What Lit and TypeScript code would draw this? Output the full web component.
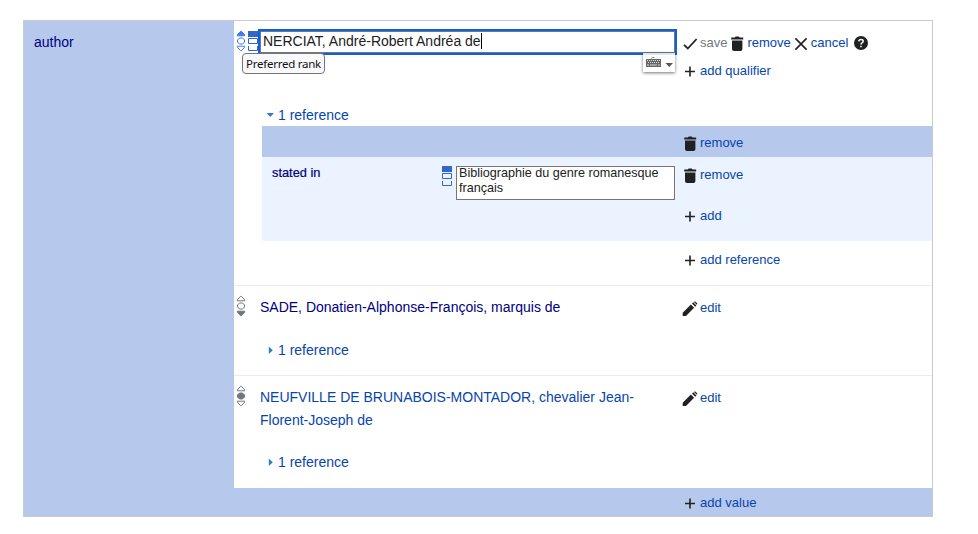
import { LitElement, html, css, svg, nothing } from "lit";
import { customElement, property } from "lit/decorators.js";

const glyphs: Record<string, unknown> = {
  check: svg`<path d="M2 9.900 5.800 13.500 14.600 4" fill="none" stroke="#202122" stroke-width="1.800"/>`,
  trash: svg`<path d="M2.200 2.600H5.700l1-1h3l1 1h3.500v2h-12zM3 5.400h10.400v8.700q0 1.900-1.900 1.900H4.900q-1.900 0-1.900-1.900z" fill="#202122"/>`,
  cross: svg`<path d="M2.400 3.400 13.600 14.600M13.600 3.400 2.400 14.600" fill="none" stroke="#202122" stroke-width="1.600"/>`,
  plus: svg`<path d="M3 8.500h10M8 3.500v10" fill="none" stroke="#202122" stroke-width="1.600"/>`,
  edit: svg`<path d="M.7 12.700 8.900 4.600l3.200 3.200-8.100 8.200H.7zM10 3.500l1.200-1.200 3.200 3.200-1.200 1.200zM12 1.900l.5-.4q.6-.3 1.100.2l1.500 1.500q.4.500.1 1l-.4.500z" fill="#202122"/>`,
};

@customElement("action-link")
export class ActionLink extends LitElement {
  @property() icon = "plus";
  @property() label = "";
  @property({ type: Boolean }) disabled = false;

  static styles = css`
    :host { display: inline-flex; height: 18px; align-items: flex-start; }
    svg { width: 16px; height: 16px; margin: 1px 2px 0 0; flex: none; overflow: visible; }
    .text { font: 13px/18px "Liberation Sans", Arial, sans-serif; color: #0645ad; white-space: nowrap; }
    .off { color: #72777d; }
  `;

  render() {
    return html`<svg viewBox="0 0 16 16">${glyphs[this.icon]}</svg
      ><span class="text ${this.disabled ? "off" : ""}">${this.label}</span>`;
  }
}

@customElement("rank-mark")
export class RankMark extends LitElement {
  @property() rank = "normal";
  @property() color = "#72777d";

  static styles = css`
    :host { display: block; width: 10px; height: 22px; }
    svg { display: block; }
  `;

  render() {
    const c = this.color;
    const fill = (r: string) => (this.rank === r ? c : "none");
    return html`<svg width="10" height="22" viewBox="0 0 10 22" stroke=${c} stroke-width="1">
      <path d="M1.300 5.800V4.900L4.600 1.300h.8L8.700 4.900v.9z" fill=${fill("preferred")} />
      <path d="M3.500 8h3L8.500 10v2L6.500 14h-3L1.500 12v-2z" fill=${fill("normal")} />
      <path d="M1.300 16.200v.9L4.600 20.700h.8L8.700 17.100v-.9z" fill=${fill("deprecated")} />
    </svg>`;
  }
}

@customElement("snak-mark")
export class SnakMark extends LitElement {
  static styles = css`
    :host { display: block; width: 10px; height: 20px; }
    svg { display: block; }
  `;

  render() {
    return html`<svg width="10" height="20" viewBox="0 0 10 20" fill="none" stroke="#36c">
      <path d="M0 0h10v6H0z" fill="#36c" stroke="none" />
      <path d="M.5 7.500h9v5h-9zM.5 15v4.500h9V15" />
    </svg>`;
  }
}

@customElement("reference-toggle")
export class ReferenceToggle extends LitElement {
  @property({ type: Boolean }) open = false;

  static styles = css`
    :host { display: flex; align-items: center; height: 20px; }
    svg { width: 8px; height: 8px; margin-right: 4px; }
    .text { font: 14px/20px "Liberation Sans", Arial, sans-serif; color: #0645ad; }
  `;

  render() {
    return html`<svg viewBox="0 0 8 8">
        <path d=${this.open ? "M.5 2h7.500L4.250 6z" : "M2.800 .5v7.500L6.800 4.250z"} fill="#347bb7" />
      </svg><span class="text">1 reference</span>`;
  }
}

@customElement("app-root")
export class AppRoot extends LitElement {
  static styles = css`
    :host {
      display: block; width: 978px; height: 534px; box-sizing: border-box;
      padding: 20px 0 0 23px; background: #fff;
      font: 14px/20px "Liberation Sans", Arial, sans-serif; color: #0645ad;
    }
    .group {
      display: grid; grid-template-columns: 210px 1fr; box-sizing: border-box;
      width: 910px; height: 497px; border: 1px solid #c8ccd1; background: #b6c8ec;
    }
    .property { padding: 11px 10px; color: #000080; }
    .values { display: flex; flex-direction: column; min-width: 0; }
    .statement {
      display: grid; grid-template-columns: 26px 422px 1fr; background: #fff;
      box-sizing: border-box; border-bottom: 1px solid #eaecf0;
    }
    .first { height: 265px; grid-template-rows: 84px 1fr; }
    .second { height: 90px; }
    .third { height: 112px; border-bottom: 0; }
    .ranks { display: flex; gap: 2px; padding: 9px 0 0 2px; }
    .editor { position: relative; padding: 8px 0 0; }
    .input {
      box-sizing: border-box; width: 419px; height: 26px; margin-left: -2px;
      border: 2px solid #0a61e4; padding: 0; display: flex; background: #fff;
    }
    .field { flex: 1; border: 1px solid #72777d; padding-left: 2px; line-height: 19px; color: #202122; white-space: nowrap; }
    .caret { display: inline-block; width: 1px; height: 16px; background: #000; vertical-align: -3px; }
    .ranks snak-mark { margin-top: 1px; }
    .tip {
      position: absolute; left: -18px; top: 32px; box-sizing: border-box; width: 83px; height: 21px;
      border: 1px solid #767676; border-radius: 4px; background: #f9f9fb; color: #111;
      font: 11.500px/19px "Noto Sans", sans-serif; letter-spacing: -.25px; text-align: center; white-space: nowrap;
    }
    .keys {
      position: absolute; left: 383px; top: 32px; width: 32px; height: 19px;
      background: rgba(255,255,255,.85); box-shadow: 0 1px 3px rgba(0,0,0,.55);
    }
    .keys svg { display: block; }
    .actions { display: flex; flex-direction: column; align-items: flex-start; gap: 10px; padding-top: 13px; }
    .line { display: flex; height: 18px; }
    .line action-link + action-link { margin-left: 2px; }
    .help { width: 14px; height: 14px; margin: 2px 0 0 6px; }
    .refs { grid-column: 1 / -1; padding-left: 28px; }
    .refs > reference-toggle { margin-left: 4px; }
    .band { height: 31px; background: #b6c8ec; padding-left: 420px; box-sizing: border-box; padding-top: 8px; margin-top: 1px; }
    .reference {
      display: grid; grid-template-columns: 180px 14px 226px 1fr; height: 84px;
      background: #eaf3ff; box-sizing: border-box; padding-top: 9px;
    }
    .name { padding: 0 0 0 10px; font-size: 12.800px; line-height: 14px; color: #000080; -webkit-text-stroke: .2px #000080; }
    .source {
      width: 219px; height: 34px; box-sizing: border-box; border: 1px solid #767676; background: #fff;
      padding: 0 2px; color: #202122; font-size: 12.600px; line-height: 15px;
    }
    .source div { margin-top: -1px; }
    .stack { display: flex; flex-direction: column; gap: 23px; }
    .more { padding: 10px 0 0 420px; }
    .value { padding-top: 10px; line-height: 23px; }
    .value .toggle { margin: 21px 0 0 6px; }
    .third .toggle { margin-top: 20px; }
    .visited { color: #000080; }
    .footer { padding: 6px 0 0 448px; }
  `;

  private statement(cls: string, rank: string, text: string, visited: boolean) {
    return html`<div class="statement ${cls}">
      <div class="ranks"><rank-mark rank=${rank}></rank-mark></div>
      <div class="value">
        <div class=${visited ? "visited" : nothing}>${text}</div>
        <reference-toggle class="toggle"></reference-toggle>
      </div>
      <div class="actions"><action-link icon="edit" label="edit"></action-link></div>
    </div>`;
  }

  render() {
    return html`<div class="group">
      <div class="property">author</div>
      <div class="values">
        <div class="statement first">
          <div class="ranks">
            <rank-mark rank="preferred" color="#3f7bea"></rank-mark><snak-mark></snak-mark>
          </div>
          <div class="editor">
            <div class="input"><div class="field">NERCIAT, André-Robert Andréa de<span class="caret"></span></div></div>
            <div class="tip">Preferred rank</div>
            <div class="keys"><svg width="32" height="19" viewBox="0 0 32 19">
              <path d="M8.500 7V5.500q0-1 1.500-1h1.500" fill="none" stroke="#888" />
              <path d="M3 6h15v8H3z" fill="#666" />
              <path d="M4 7.500h13M5 9.500h12" stroke="#ddd" stroke-dasharray="1 1" />
              <path d="M4 12h2m1 0h7m1 0h2" stroke="#ddd" />
              <path d="M22.500 10h7.500l-3.750 4z" fill="#555" />
            </svg></div>
          </div>
          <div class="actions">
            <div class="line">
              <action-link icon="check" label="save" disabled></action-link>
              <action-link icon="trash" label="remove"></action-link>
              <action-link icon="cross" label="cancel"></action-link>
              <svg class="help" viewBox="0 0 14 14">
                <circle cx="7" cy="7" r="7" fill="#202122" />
                <path d="M4.800 5.400Q4.900 3.500 7 3.500T9.200 5.200Q9.200 6.200 8 6.800 7 7.300 7 8.600M7 9.700v1.600" fill="none" stroke="#fff" stroke-width="1.500" />
              </svg>
            </div>
            <action-link label="add qualifier"></action-link>
          </div>
          <div class="refs">
            <reference-toggle open></reference-toggle>
            <div class="band"><action-link icon="trash" label="remove"></action-link></div>
            <div class="reference">
              <div class="name">stated in</div>
              <snak-mark></snak-mark>
              <div class="source"><div>Bibliographie du genre romanesque français</div></div>
              <div class="stack">
                <action-link icon="trash" label="remove"></action-link>
                <action-link label="add"></action-link>
              </div>
            </div>
            <div class="more"><action-link label="add reference"></action-link></div>
          </div>
        </div>
        ${this.statement("second", "deprecated", "SADE, Donatien-Alphonse-François, marquis de", true)}
        ${this.statement("third", "normal", "NEUFVILLE DE BRUNABOIS-MONTADOR, chevalier Jean-Florent-Joseph de", false)}
        <div class="footer"><action-link label="add value"></action-link></div>
      </div>
    </div>`;
  }
}
